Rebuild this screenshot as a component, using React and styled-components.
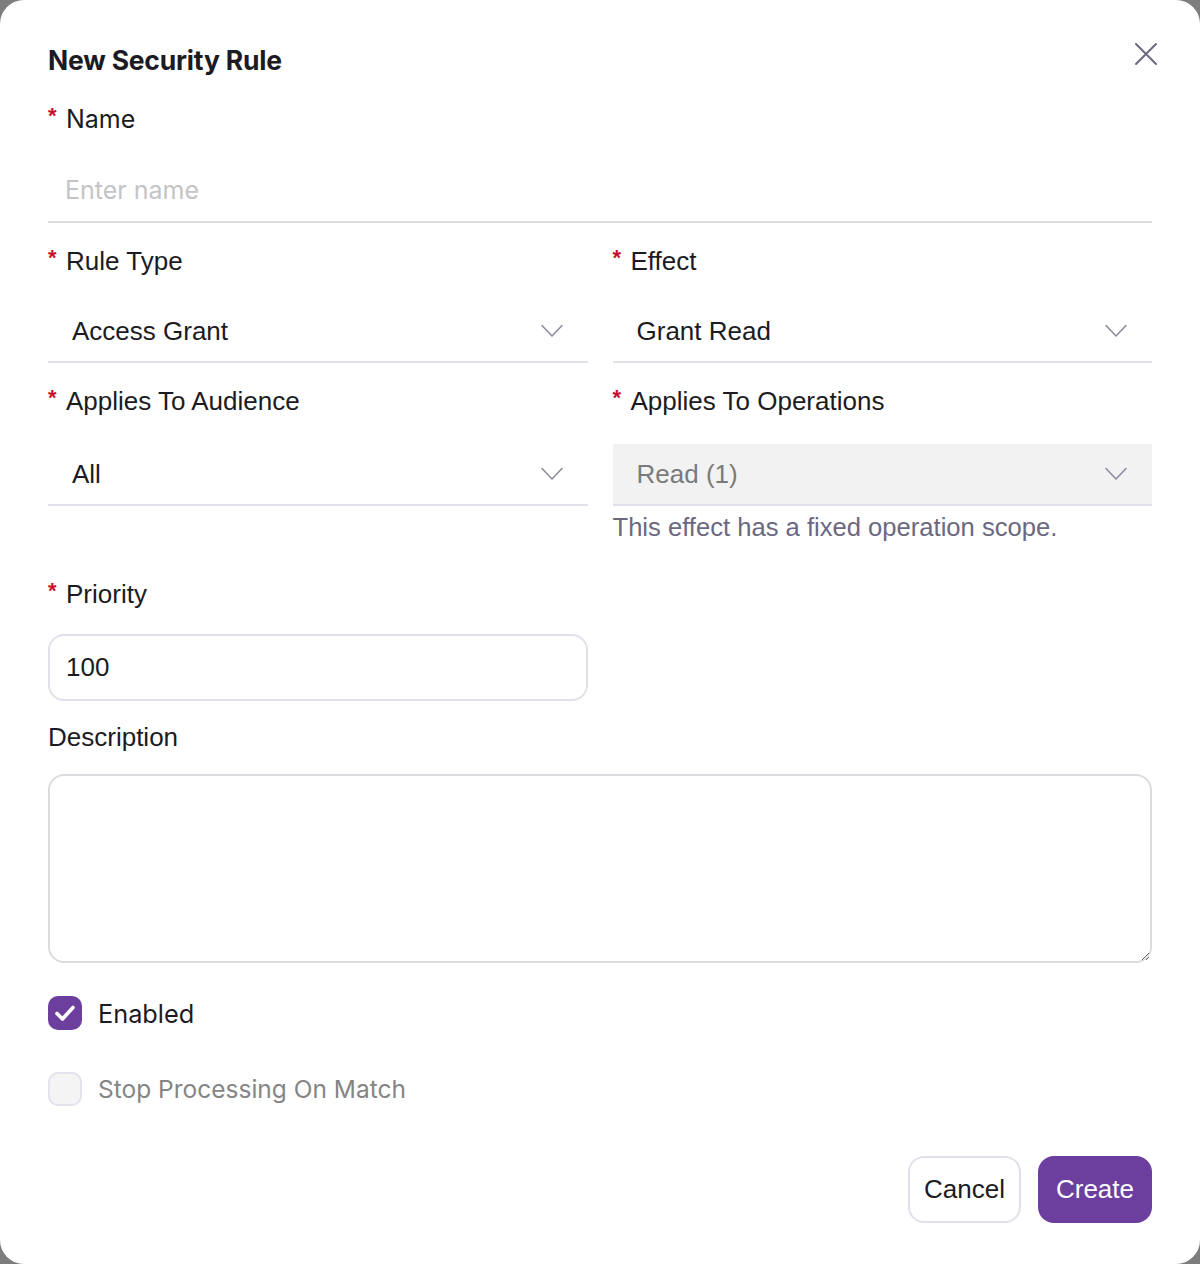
import React, { useState } from 'react';
import styled, { createGlobalStyle } from 'styled-components';

const GlobalStyle = createGlobalStyle`
  html, body {
    margin: 0;
    padding: 0;
    background: #7d7d7d;
  }
  body {
    font-family: "Liberation Sans", Arial, sans-serif;
    color: #1c1b22;
  }
  * { box-sizing: border-box; }
`;

const purple = '#6c3f9e';

const Modal = styled.div`
  position: relative;
  width: 1200px;
  min-height: 1264px;
  background: #fff;
  border-radius: 24px;
  padding: 44px 48px 41px;
  display: flex;
  flex-direction: column;
`;

const Title = styled.h2`
  margin: 0 0 28px;
  font-family: Inter, "Liberation Sans", sans-serif;
  font-weight: 700;
  font-size: 26.5px;
  line-height: 32px;
  letter-spacing: -0.2px;
  color: #1c1b22;
`;

const CloseButton = styled.button`
  position: absolute;
  top: 41px;
  right: 41px;
  width: 26px;
  height: 26px;
  padding: 0;
  border: none;
  background: none;
  cursor: pointer;
  color: #6b6880;
  display: flex;
  align-items: center;
  justify-content: center;
`;

const Grid = styled.div`
  display: grid;
  grid-template-columns: 1fr 1fr;
  column-gap: 25px;
`;

const Field = styled.div`
  grid-column: ${(p) => (p.$full ? '1 / -1' : 'auto')};
  margin-bottom: ${(p) => p.$mb ?? 23}px;
  display: flex;
  flex-direction: column;
`;

const Label = styled.label`
  display: flex;
  align-items: center;
  height: 30px;
  font-size: ${(p) => (p.$inter ? 25 : 26)}px;
  font-family: ${(p) => (p.$inter ? 'Inter, "Liberation Sans", sans-serif' : '"Liberation Sans", Arial, sans-serif')};
  margin-bottom: ${(p) => p.$mb ?? 25}px;
  color: #1c1b22;
`;

const Star = styled.span`
  color: #c8102e;
  font-size: 22px;
  font-weight: 700;
  width: 18px;
  margin-top: -7px;
  font-family: "Liberation Sans", Arial, sans-serif;
`;

const UnderlineInput = styled.input`
  height: 63px;
  border: none;
  border-bottom: 2px solid #dcdce0;
  padding: 0 17px;
  font-size: 25px;
  font-family: "Liberation Sans", Arial, sans-serif;
  color: #1c1b22;
  outline: none;
  margin-top: 1px;
  &::placeholder {
    color: #c4c4c6;
    font-family: Inter, "Liberation Sans", sans-serif;
  }
`;

const SelectBox = styled.div`
  height: 62px;
  display: flex;
  align-items: center;
  justify-content: space-between;
  padding: 0 24px;
  border-bottom: 2px solid #e2e0ea;
  background: ${(p) => (p.$disabled ? '#f2f2f2' : 'transparent')};
  color: ${(p) => (p.$disabled ? '#7a7a7a' : '#1c1b22')};
  font-size: 26px;
  cursor: ${(p) => (p.$disabled ? 'default' : 'pointer')};
`;

const Chevron = styled.svg`
  width: 22px;
  height: 14px;
  color: #8e8b9c;
  flex-shrink: 0;
  margin-right: 1px;
`;

const Helper = styled.div`
  margin-top: 6px;
  font-size: 25.6px;
  line-height: 30px;
  color: #6b6880;
`;

const BoxInput = styled.input`
  height: 67px;
  border: 2px solid #e2e0ea;
  border-radius: 16px;
  padding: 0 16px;
  font-size: 26px;
  font-family: "Liberation Sans", Arial, sans-serif;
  color: #1c1b22;
  outline: none;
`;

const TextArea = styled.textarea`
  height: 189px;
  border: 2px solid #dcdce0;
  border-radius: 16px;
  padding: 16px;
  font-size: 26px;
  font-family: "Liberation Sans", Arial, sans-serif;
  outline: none;
  resize: vertical;
`;

const CheckRow = styled.label`
  display: flex;
  align-items: center;
  gap: 16px;
  margin-top: ${(p) => p.$mt}px;
  font-family: Inter, "Liberation Sans", sans-serif;
  font-size: ${(p) => p.$size}px;
  color: ${(p) => (p.$muted ? '#858585' : '#1c1b22')};
  cursor: pointer;
`;

const Box = styled.span`
  width: 34px;
  height: 34px;
  border-radius: 10px;
  display: flex;
  align-items: center;
  justify-content: center;
  background: ${(p) => (p.$checked ? purple : '#f4f4f5')};
  border: ${(p) => (p.$checked ? 'none' : '2px solid #e4e2ec')};
`;

const Footer = styled.div`
  margin-top: auto;
  display: flex;
  justify-content: flex-end;
  gap: 17px;
`;

const Button = styled.button`
  height: 67px;
  border-radius: 16px;
  font-size: 26px;
  font-family: "Liberation Sans", Arial, sans-serif;
  cursor: pointer;
  border: ${(p) => (p.$primary ? 'none' : '2px solid #e2e0ea')};
  background: ${(p) => (p.$primary ? purple : '#fff')};
  color: ${(p) => (p.$primary ? '#fff' : '#1c1b22')};
  padding: ${(p) => (p.$primary ? '0 18px' : '0 14px')};
`;

const ChevronDown = () => (
  <Chevron viewBox="0 0 22 14" fill="none">
    <path d="M1 1.5 L11 12 L21 1.5" stroke="currentColor" strokeWidth="1.6" strokeLinecap="round" strokeLinejoin="round" />
  </Chevron>
);

const Select = ({ value, disabled }) => (
  <SelectBox $disabled={disabled}>
    <span>{value}</span>
    <ChevronDown />
  </SelectBox>
);

const Required = ({ children, inter, mb }) => (
  <Label $inter={inter} $mb={mb}>
    <Star>*</Star>
    {children}
  </Label>
);

const Checkbox = ({ checked, muted, label, mt, size, onToggle }) => (
  <CheckRow $muted={muted} $mt={mt} $size={size} onClick={onToggle}>
    <Box $checked={checked}>
      {checked && (
        <svg width="26" height="26" viewBox="0 0 26 26" fill="none">
          <path d="M5 13.5 L10.5 19 L21 7.5" stroke="#fff" strokeWidth="3.6" strokeLinecap="round" strokeLinejoin="round" />
        </svg>
      )}
    </Box>
    {label}
  </CheckRow>
);

export default function App() {
  const [enabled, setEnabled] = useState(true);
  const [stop, setStop] = useState(false);

  return (
    <>
      <GlobalStyle />
      <Modal>
        <Title>New Security Rule</Title>
        <CloseButton aria-label="Close">
          <svg width="24" height="24" viewBox="0 0 24 24" fill="none">
            <path d="M2 2 L22 22 M22 2 L2 22" stroke="currentColor" strokeWidth="2" strokeLinecap="round" />
          </svg>
        </CloseButton>

        <Grid>
          <Field $full>
            <Required inter mb={25}>Name</Required>
            <UnderlineInput placeholder="Enter name" />
          </Field>

          <Field>
            <Required>Rule Type</Required>
            <Select value="Access Grant" />
          </Field>
          <Field>
            <Required>Effect</Required>
            <Select value="Grant Read" />
          </Field>

          <Field $mb={37}>
            <Required mb={28}>Applies To Audience</Required>
            <Select value="All" />
          </Field>
          <Field $mb={37}>
            <Required mb={28}>Applies To Operations</Required>
            <Select value="Read (1)" disabled />
            <Helper>This effect has a fixed operation scope.</Helper>
          </Field>

          <Field $mb={21}>
            <Required>Priority</Required>
            <BoxInput defaultValue="100" />
          </Field>
          <div />

          <Field $full $mb={0}>
            <Label $mb={22}>Description</Label>
            <TextArea />
          </Field>
        </Grid>

        <Checkbox checked={enabled} label="Enabled" size={25.3} mt={33} onToggle={() => setEnabled(!enabled)} />
        <Checkbox checked={stop} muted label="Stop Processing On Match" size={24.5} mt={42} onToggle={() => setStop(!stop)} />

        <Footer>
          <Button>Cancel</Button>
          <Button $primary>Create</Button>
        </Footer>
      </Modal>
    </>
  );
}
